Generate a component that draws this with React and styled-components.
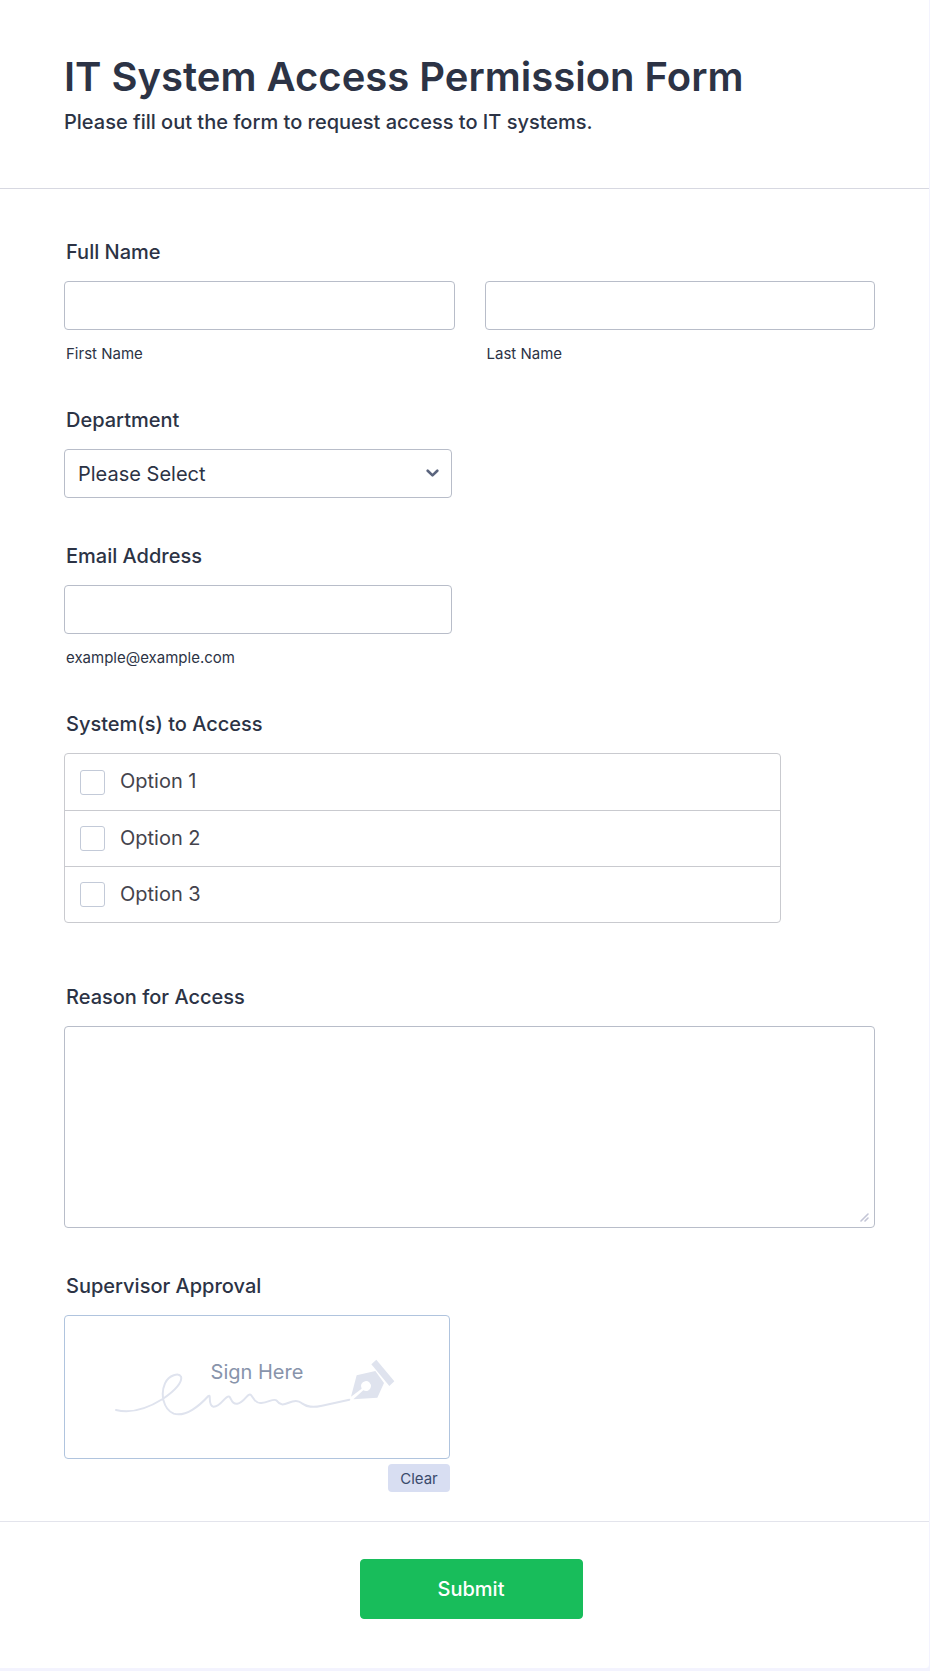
import React from "react";
import styled, { createGlobalStyle } from "styled-components";

const GlobalStyle = createGlobalStyle`
  *, *::before, *::after { box-sizing: border-box; }
  body {
    margin: 0;
    background: #f3f3fe;
    color: #2c3345;
    font-family: Inter, "Liberation Sans", sans-serif;
  }
  button, input, select, textarea { font: inherit; color: inherit; }
`;

const Form = styled.form`
  margin-bottom: 3px;
  background: #fff;
  border-right: 1px solid #f3f3fe;
  border-radius: 0 0 4px 0;
`;

const Header = styled.header`
  padding: 52px 54px 54px 64px;
  border-bottom: 1px solid #d7d8e1;
`;

const Title = styled.h1`
  margin: 0;
  font-size: 40px;
  font-weight: 600;
  line-height: 50px;
`;

const Subtitle = styled.p`
  margin: 8px 0 0;
  font-size: 20px;
  font-weight: 500;
  line-height: 24px;
`;

const Fields = styled.div`
  display: flex;
  flex-direction: column;
  gap: 46px;
  padding: 51px 54px 29px 64px;
`;

const Field = styled.div`
  display: flex;
  flex-direction: column;
  gap: 17px;
  width: 100%;
  max-width: ${(p) => p.$max || "none"};
  padding-bottom: ${(p) => (p.$spaced ? "16px" : "0")};
`;

const Label = styled.label`
  padding-left: 2px;
  font-size: 20px;
  font-weight: 500;
  line-height: 24px;
`;

const Columns = styled.div`
  display: grid;
  grid-template-columns: 1fr 1fr;
  gap: 30px;
`;

const Stack = styled.div`
  display: flex;
  flex-direction: column;
  gap: 15px;
`;

const SubLabel = styled.label`
  padding-left: 2px;
  font-size: 15px;
  line-height: 17px;
`;

const TextInput = styled.input`
  width: 100%;
  height: 49px;
  padding: 0 13px;
  font-size: 20px;
  background: #fff;
  border: 1px solid #b8bdc9;
  border-radius: 4px;
`;

const SelectWrap = styled.div`
  display: grid;
  align-items: center;
`;

const Select = styled.select`
  grid-area: 1 / 1;
  width: 100%;
  height: 49px;
  padding: 0 40px 0 13px;
  font-size: 20px;
  background: #fff;
  border: 1px solid #b8bdc9;
  border-radius: 4px;
  appearance: none;
`;

const Chevron = styled.svg`
  grid-area: 1 / 1;
  justify-self: end;
  margin-right: 13px;
  pointer-events: none;
`;

const OptionList = styled.div`
  border: 1px solid #c9cacf;
  border-radius: 4px;
`;

const Option = styled.label`
  display: flex;
  align-items: center;
  gap: 15px;
  height: 56px;
  padding-left: 15px;
  font-size: 20px;
  line-height: 24px;
  color: #44434c;

  & + & { border-top: 1px solid #c9cacf; }
`;

const OptionText = styled.span`
  padding-bottom: 2px;
`;

const Checkbox = styled.input`
  appearance: none;
  width: 25px;
  height: 25px;
  margin: 0;
  background: #fff;
  border: 1px solid #c3cad8;
  border-radius: 3px;

  &:checked { background: #2e69ff; }
`;

const TextAreaWrap = styled.div`
  display: grid;
`;

const TextArea = styled.textarea`
  grid-area: 1 / 1;
  display: block;
  width: 100%;
  height: 202px;
  padding: 10px 13px;
  font-size: 20px;
  background: #fff;
  border: 1px solid #b8bdc9;
  border-radius: 4px;
  resize: vertical;

  &::-webkit-resizer { background: transparent; }
`;

const Grip = styled.svg`
  grid-area: 1 / 1;
  place-self: end;
  margin: 0 6px 6px 0;
  pointer-events: none;
`;

const Signature = styled.div`
  display: flex;
  flex-direction: column;
  align-items: flex-end;
  gap: 5px;
`;

const SignaturePad = styled.div`
  display: grid;
  place-items: center;
  width: 100%;
  height: 144px;
  border: 1px solid #b0c4de;
  border-radius: 4px;
`;

const Scribble = styled.svg`
  grid-area: 1 / 1;
  width: 310px;
  max-width: 100%;
  height: 75px;
`;

const SignHere = styled.span`
  grid-area: 1 / 1;
  padding-bottom: 30px;
  font-size: 20px;
  line-height: 24px;
  color: #8894ab;
`;

const ClearButton = styled.button`
  width: 62px;
  height: 28px;
  padding: 0;
  font-size: 15px;
  color: #3a4a6c;
  background: #d8def2;
  border: 0;
  border-radius: 4px;
`;

const Footer = styled.footer`
  display: flex;
  justify-content: center;
  padding: 37px 41px 49px 54px;
  border-top: 1px solid #e3e4ec;
`;

const SubmitButton = styled.button`
  width: 223px;
  height: 60px;
  font-size: 20px;
  font-weight: 500;
  color: #fff;
  background: #18bd5b;
  border: 1px solid #18bd5b;
  border-radius: 4px;
`;

const systems = ["Option 1", "Option 2", "Option 3"];

export default function App() {
  return (
    <>
      <GlobalStyle />
      <Form onSubmit={(e) => e.preventDefault()}>
        <Header>
          <Title>IT System Access Permission Form</Title>
          <Subtitle>Please fill out the form to request access to IT systems.</Subtitle>
        </Header>

        <Fields>
          <Field role="group" aria-labelledby="name-label">
            <Label as="span" id="name-label">Full Name</Label>
            <Columns>
              <Stack>
                <TextInput id="first" type="text" />
                <SubLabel htmlFor="first">First Name</SubLabel>
              </Stack>
              <Stack>
                <TextInput id="last" type="text" />
                <SubLabel htmlFor="last">Last Name</SubLabel>
              </Stack>
            </Columns>
          </Field>

          <Field $max="388px">
            <Label htmlFor="department">Department</Label>
            <SelectWrap>
              <Select id="department">
                <option>Please Select</option>
              </Select>
              <Chevron width="13" height="9" viewBox="0 0 13 9" fill="none" aria-hidden="true">
                <path d="M1.7 1.7 6.5 6.4 11.3 1.7" stroke="#5b657e" strokeWidth="2.6" strokeLinecap="round" strokeLinejoin="round" />
              </Chevron>
            </SelectWrap>
          </Field>

          <Field $max="388px">
            <Label htmlFor="email">Email Address</Label>
            <Stack>
              <TextInput id="email" type="email" />
              <SubLabel htmlFor="email">example@example.com</SubLabel>
            </Stack>
          </Field>

          <Field $max="717px" $spaced role="group" aria-labelledby="systems-label">
            <Label as="span" id="systems-label">System(s) to Access</Label>
            <OptionList>
              {systems.map((name) => (
                <Option key={name}>
                  <Checkbox type="checkbox" />
                  <OptionText>{name}</OptionText>
                </Option>
              ))}
            </OptionList>
          </Field>

          <Field>
            <Label htmlFor="reason">Reason for Access</Label>
            <TextAreaWrap>
              <TextArea id="reason" />
              <Grip width="9" height="9" viewBox="0 0 9 9" fill="none" aria-hidden="true">
                <path d="M1 8 8 1M5 8 8 5" stroke="#c3c5d6" strokeWidth="1.6" strokeLinecap="round" />
              </Grip>
            </TextAreaWrap>
          </Field>

          <Field $max="386px" role="group" aria-labelledby="approval-label">
            <Label as="span" id="approval-label">Supervisor Approval</Label>
            <Signature>
              <SignaturePad>
                <Scribble viewBox="6 -2 930 225" fill="none" aria-hidden="true">
                  <path
                    d="M48 178C88 188 132 180 188 145C226 120 248 94 243 78C237 66 207 72 195 98C181 129 189 175 221 189C257 200 299 165 325 136C335 129 322 164 340 168C363 170 376 132 388 138C394 142 394 162 412 159C433 156 443 125 452 132C459 138 464 160 484 157C507 155 523 141 530 150C540 164 550 163 564 157C583 149 594 148 606 158C622 170 638 171 666 165L748 147"
                    stroke="#dfe3ee"
                    strokeWidth="6"
                    strokeLinecap="round"
                    strokeLinejoin="round"
                  />
                  <path
                    d="M753 138L770 74L826 61L852 97L832 141L760 146L790 119A15 15 0 1 0 785 114Z"
                    fill="#dfe3ee"
                  />
                  <path d="M814 41L829 27L883 92L868 106Z" fill="#dfe3ee" />
                </Scribble>
                <SignHere>Sign Here</SignHere>
              </SignaturePad>
              <ClearButton type="button">Clear</ClearButton>
            </Signature>
          </Field>
        </Fields>

        <Footer>
          <SubmitButton type="submit">Submit</SubmitButton>
        </Footer>
      </Form>
    </>
  );
}
